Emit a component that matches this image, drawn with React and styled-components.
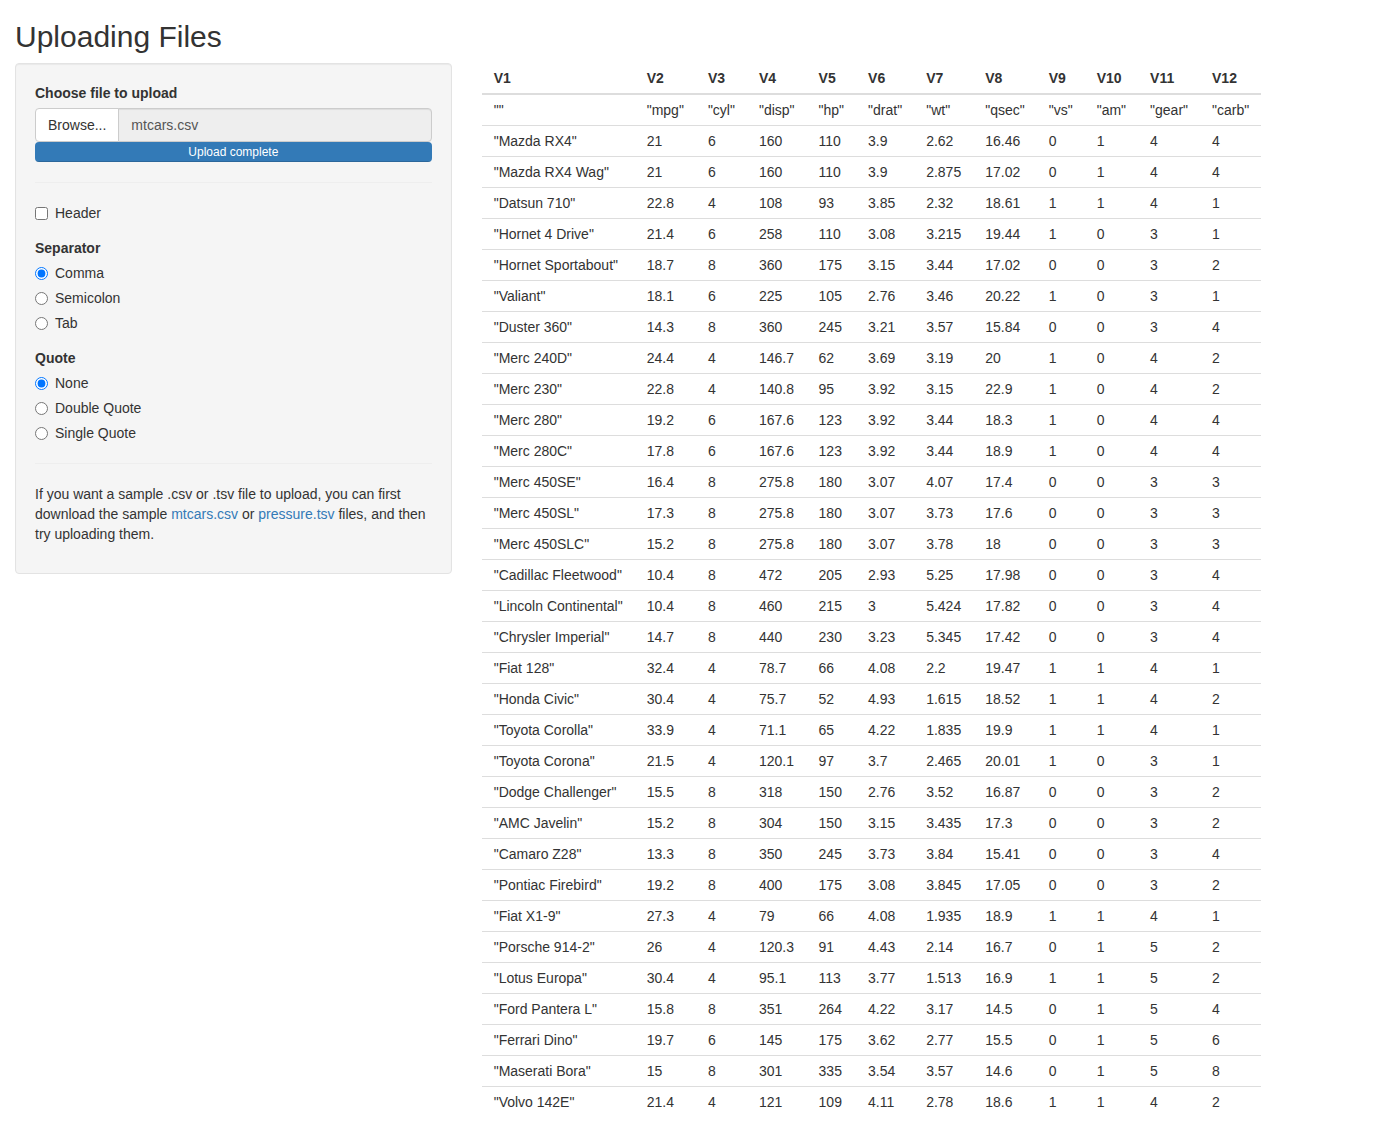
import React from "react";
import styled, { createGlobalStyle } from "styled-components";

const GlobalStyle = createGlobalStyle`
  *, *::before, *::after { box-sizing: border-box; }
  html, body { margin: 0; padding: 0; background: #fff; }
  body {
    font-family: "Liberation Sans", Arial, Helvetica, sans-serif;
    font-size: 14px;
    line-height: 20px;
    color: #333;
  }
`;

const Container = styled.div`
  padding: 0 15px;
`;

const Title = styled.h2`
  font-family: "Liberation Sans", Arial, sans-serif;
  font-size: 30px;
  font-weight: 500;
  line-height: 33px;
  margin: 20px 0 10px;
  color: #333;
`;

const Row = styled.div`
  display: flex;
  align-items: flex-start;
  margin: 0 -15px;
`;

const Col = styled.div`
  width: ${(p) => p.$span}%;
  padding: 0 15px;
  flex: none;
`;

const Well = styled.form`
  display: block;
  padding: 19px;
  background: #f5f5f5;
  border: 1px solid #e3e3e3;
  border-radius: 4px;
  box-shadow: inset 0 1px 1px rgba(0, 0, 0, 0.05);
`;

const FormGroup = styled.div`
  margin-bottom: 15px;
`;

const FieldLabel = styled.label`
  display: block;
  font-weight: bold;
  line-height: 20px;
  margin-bottom: 5px;
`;

const InputGroup = styled.div`
  display: flex;
  height: 34px;
`;

const BrowseButton = styled.span`
  display: inline-flex;
  align-items: center;
  padding: 6px 12px;
  background: #fff;
  border: 1px solid #ccc;
  border-radius: 4px 0 0 4px;
  color: #333;
  font-size: 14px;
  white-space: nowrap;
  cursor: pointer;
`;

const FileName = styled.div`
  flex: 1;
  display: flex;
  align-items: center;
  padding: 6px 12px;
  margin-left: -1px;
  background: #eee;
  border: 1px solid #ccc;
  border-radius: 0 4px 4px 0;
  color: #555;
  box-shadow: inset 0 1px 1px rgba(0, 0, 0, 0.075);
`;

const Progress = styled.div`
  height: 20px;
  border-radius: 4px;
  overflow: hidden;
  background: #f5f5f5;
`;

const ProgressBar = styled.div`
  height: 100%;
  background: #337ab7;
  color: #fff;
  font-size: 12px;
  line-height: 20px;
  text-align: center;
  box-shadow: inset 0 -1px 0 rgba(0, 0, 0, 0.15);
`;

const Divider = styled.hr`
  margin: 20px 0;
  border: 0;
  border-top: 1px solid #eee;
  height: 0;
`;

const Options = styled.div`
  display: flex;
  flex-direction: column;
  gap: 5px;
`;

const OptionLabel = styled.label`
  display: flex;
  align-items: center;
  gap: 7px;
  line-height: 20px;
  height: 20px;
  font-weight: normal;
  cursor: pointer;

  input {
    margin: 0;
    width: 13px;
    height: 13px;
  }
`;

const Paragraph = styled.p`
  margin: 0 0 10px;
`;

const Link = styled.a`
  color: #337ab7;
  text-decoration: none;
`;

const Table = styled.table`
  border-collapse: collapse;
  border-spacing: 0;
  margin-bottom: 20px;
`;

const Th = styled.th`
  text-align: left;
  font-weight: bold;
  padding: 5px 12px;
  line-height: 20px;
  vertical-align: bottom;
  border-bottom: 2px solid #ddd;
  white-space: nowrap;
`;

const Td = styled.td`
  padding: 5px 12px;
  line-height: 20px;
  border-top: 1px solid #ddd;
  white-space: nowrap;
`;

const raw = `Mazda RX4|21|6|160|110|3.9|2.62|16.46|0|1|4|4
Mazda RX4 Wag|21|6|160|110|3.9|2.875|17.02|0|1|4|4
Datsun 710|22.8|4|108|93|3.85|2.32|18.61|1|1|4|1
Hornet 4 Drive|21.4|6|258|110|3.08|3.215|19.44|1|0|3|1
Hornet Sportabout|18.7|8|360|175|3.15|3.44|17.02|0|0|3|2
Valiant|18.1|6|225|105|2.76|3.46|20.22|1|0|3|1
Duster 360|14.3|8|360|245|3.21|3.57|15.84|0|0|3|4
Merc 240D|24.4|4|146.7|62|3.69|3.19|20|1|0|4|2
Merc 230|22.8|4|140.8|95|3.92|3.15|22.9|1|0|4|2
Merc 280|19.2|6|167.6|123|3.92|3.44|18.3|1|0|4|4
Merc 280C|17.8|6|167.6|123|3.92|3.44|18.9|1|0|4|4
Merc 450SE|16.4|8|275.8|180|3.07|4.07|17.4|0|0|3|3
Merc 450SL|17.3|8|275.8|180|3.07|3.73|17.6|0|0|3|3
Merc 450SLC|15.2|8|275.8|180|3.07|3.78|18|0|0|3|3
Cadillac Fleetwood|10.4|8|472|205|2.93|5.25|17.98|0|0|3|4
Lincoln Continental|10.4|8|460|215|3|5.424|17.82|0|0|3|4
Chrysler Imperial|14.7|8|440|230|3.23|5.345|17.42|0|0|3|4
Fiat 128|32.4|4|78.7|66|4.08|2.2|19.47|1|1|4|1
Honda Civic|30.4|4|75.7|52|4.93|1.615|18.52|1|1|4|2
Toyota Corolla|33.9|4|71.1|65|4.22|1.835|19.9|1|1|4|1
Toyota Corona|21.5|4|120.1|97|3.7|2.465|20.01|1|0|3|1
Dodge Challenger|15.5|8|318|150|2.76|3.52|16.87|0|0|3|2
AMC Javelin|15.2|8|304|150|3.15|3.435|17.3|0|0|3|2
Camaro Z28|13.3|8|350|245|3.73|3.84|15.41|0|0|3|4
Pontiac Firebird|19.2|8|400|175|3.08|3.845|17.05|0|0|3|2
Fiat X1-9|27.3|4|79|66|4.08|1.935|18.9|1|1|4|1
Porsche 914-2|26|4|120.3|91|4.43|2.14|16.7|0|1|5|2
Lotus Europa|30.4|4|95.1|113|3.77|1.513|16.9|1|1|5|2
Ford Pantera L|15.8|8|351|264|4.22|3.17|14.5|0|1|5|4
Ferrari Dino|19.7|6|145|175|3.62|2.77|15.5|0|1|5|6
Maserati Bora|15|8|301|335|3.54|3.57|14.6|0|1|5|8
Volvo 142E|21.4|4|121|109|4.11|2.78|18.6|1|1|4|2`;

const headerRow = ['""', '"mpg"', '"cyl"', '"disp"', '"hp"', '"drat"', '"wt"', '"qsec"', '"vs"', '"am"', '"gear"', '"carb"'];
const rows = [
  headerRow,
  ...raw.split("\n").map((line) => {
    const parts = line.split("|");
    return [`"${parts[0]}"`, ...parts.slice(1)];
  }),
];
const columns = Array.from({ length: 12 }, (_, i) => `V${i + 1}`);

function RadioGroup({ name, label, options, checked }) {
  return (
    <FormGroup>
      <FieldLabel>{label}</FieldLabel>
      <Options>
        {options.map((o) => (
          <OptionLabel key={o}>
            <input type="radio" name={name} defaultChecked={o === checked} />
            <span>{o}</span>
          </OptionLabel>
        ))}
      </Options>
    </FormGroup>
  );
}

export default function App() {
  return (
    <>
      <GlobalStyle />
      <Container>
        <Title>Uploading Files</Title>
        <Row>
          <Col $span={33.333333}>
            <Well onSubmit={(e) => e.preventDefault()}>
              <FormGroup>
                <FieldLabel>Choose file to upload</FieldLabel>
                <InputGroup>
                  <BrowseButton>Browse...</BrowseButton>
                  <FileName>mtcars.csv</FileName>
                </InputGroup>
                <Progress>
                  <ProgressBar style={{ width: "100%" }}>Upload complete</ProgressBar>
                </Progress>
              </FormGroup>
              <Divider />
              <FormGroup>
                <OptionLabel>
                  <input type="checkbox" />
                  <span>Header</span>
                </OptionLabel>
              </FormGroup>
              <RadioGroup
                name="sep"
                label="Separator"
                options={["Comma", "Semicolon", "Tab"]}
                checked="Comma"
              />
              <RadioGroup
                name="quote"
                label="Quote"
                options={["None", "Double Quote", "Single Quote"]}
                checked="None"
              />
              <Divider />
              <Paragraph>
                If you want a sample .csv or .tsv file to upload, you can first download the sample{" "}
                <Link href="#">mtcars.csv</Link> or <Link href="#">pressure.tsv</Link> files, and then try
                uploading them.
              </Paragraph>
            </Well>
          </Col>
          <Col $span={66.666667}>
            <Table>
              <thead>
                <tr>
                  {columns.map((c) => (
                    <Th key={c}>{c}</Th>
                  ))}
                </tr>
              </thead>
              <tbody>
                {rows.map((r, i) => (
                  <tr key={i}>
                    {r.map((v, j) => (
                      <Td key={j}>{v}</Td>
                    ))}
                  </tr>
                ))}
              </tbody>
            </Table>
          </Col>
        </Row>
      </Container>
    </>
  );
}
